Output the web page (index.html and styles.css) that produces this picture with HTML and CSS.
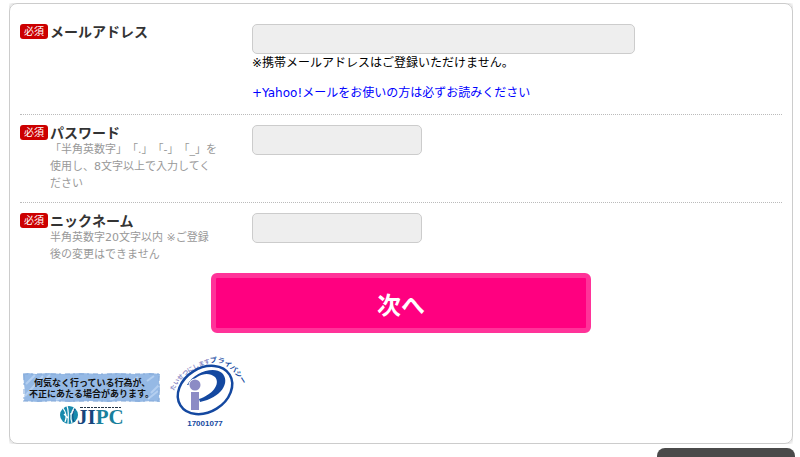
FILE: index.html
```html
<!DOCTYPE html>
<html lang="ja">
  <head>
    <meta charset="UTF-8" />
    <meta name="viewport" content="width=device-width, initial-scale=1.0" />
    <title>会員登録</title>

    <link rel="stylesheet" href="styles.css">
  </head>
  <body>
    <div class="box">
      <form>
        <div class="row">
          <span class="required">必須</span>
          <div class="item">
            <label for="mail">メールアドレス</label>
          </div>
          <div class="field">
            <input type="email" id="mail" class="wide" />
            <p>※携帯メールアドレスはご登録いただけません。</p>
            <a href="#">+Yahoo!メールをお使いの方は必ずお読みください</a>
          </div>
        </div>

        <div class="row">
          <span class="required">必須</span>
          <div class="item">
            <label for="password">パスワード</label>
            <p>「半角英数字」「.」「-」「_」を使用し、8文字以上で入力してください</p>
          </div>
          <div class="field">
            <input type="password" id="password" />
          </div>
        </div>

        <div class="row">
          <span class="required">必須</span>
          <div class="item">
            <label for="nickname">ニックネーム</label>
            <p>半角英数字20文字以内 ※ご登録後の変更はできません</p>
          </div>
          <div class="field">
            <input type="text" id="nickname" />
          </div>
        </div>

        <button type="submit" class="next">次へ</button>
      </form>

      <div class="logos">
        <!-- JIPC -->
        <a href="#" aria-label="JIPC">
          <svg width="144" height="80" viewBox="0 0 144 80">
            <path fill="#95b9e5" d="M3 21l5-1 8 1 12-1 15 1 18-1 20 1 16-1 18 1 15-1 10 1-1 7 1 8-1 7 1 6-9-1-12 1-17-1-14 1-18-1-20 1-17-1-15 1-14-1 1-9-1-8z" />
            <path stroke="#b4cff0" stroke-width="2" fill="none" d="M6 31l9-9M5 43l18-20M24 27l6-5M118 24l-9 6M134 23l-7 5M139 32l-8 8M128 46l10-8M36 47l9-4M90 47l10-5" />
            <path stroke="#84a9d8" fill="none" stroke-dasharray="5 3 2 4" d="M3 21h136M3 48h137M4 22v25M139 23v24" />
            <text class="banner" x="14" y="33">何気なく行っている行為が、</text>
            <text class="banner" x="9" y="44">不正にあたる場合があります。</text>
            <path stroke="#234" stroke-width="1" stroke-dasharray="3 1 2 1" d="M60 54.500h42" />
            <circle cx="49" cy="62" r="9" fill="#1689ac" />
            <path stroke="#fff" stroke-width="1.200" fill="none" d="M43 55q5 7 2 14M47 53q2 5 1 18M54 55q-5 7-2 15M50 61q3 0 4-4M44 61l4 4" />
            <path stroke="#17457c" stroke-width="1" fill="none" d="M55 56q-4 6-1 13" />
            <text class="jipc" x="57" y="71">JI<tspan fill="#19809c">PC</tspan></text>
          </svg>
        </a>

        <!-- プライバシーマーク -->
        <a href="#" aria-label="プライバシーマーク">
          <svg width="88" height="80" viewBox="0 0 88 80">
            <path id="arc_left" fill="none" d="M10 38Q17 18 52 8" />
            <path id="arc_right" fill="none" d="M46 10C60 7 71 17 81 36" />
            <text class="seal_left"><textPath href="#arc_left">たいせつにします</textPath></text>
            <text class="seal_right"><textPath href="#arc_right">プライバシー</textPath></text>
            <ellipse cx="41" cy="37" rx="29" ry="22" transform="rotate(-32 41 37)" fill="none" stroke="#1448a0" stroke-width="2.500" />
            <path fill="#1448a0" d="M23 32C30 19 50 13 58 20C67 29 57 45 36 49L35 46C48 42 57 31 51 24C44 18 33 21 25 32Z" />
            <circle cx="31" cy="32" r="6.500" fill="#fff" />
            <circle cx="31" cy="32" r="5.500" fill="#8c8bc5" />
            <path fill="#8c8bc5" d="M27 39h8v18h-8z" />
            <text class="number" x="41" y="73">17001077</text>
          </svg>
        </a>
      </div>
    </div>

    <a href="#" class="page_top" aria-label="ページの先頭へ"></a>
  </body>
</html>
```

FILE: styles.css
```css
* {
  box-sizing: border-box;
}

body {
  margin: 3px 7px 0 9px;
  background-color: #fff;
  color: #000;
  font-family: "DejaVu Sans", "Noto Sans CJK JP", sans-serif;
  font-size: 12px;
  line-height: 17px;
  text-spacing-trim: space-all;
}

p {
  margin: 0;
}

a {
  color: #00f;
  text-decoration: none;
}

.box {
  padding: 10px;
  border: 1px solid #ccc;
  border-radius: 8px;
  box-shadow: 0 0 4px #bbb;
}

.row {
  display: flex;
  align-items: flex-start;
  padding: 10px 0;
  border-bottom: 1px dotted #bbb;
}

.row:last-of-type {
  border-bottom: none;
}

.required {
  width: 28px;
  margin-right: 2px;
  border-radius: 3px;
  background-color: #c00;
  color: #fff;
  font-size: 10px;
  line-height: 15px;
  text-align: center;
}

.item {
  width: 168px;
  margin-right: 34px;
}

.item label {
  display: block;
  color: #333;
  font-size: 14px;
  font-weight: bold;
  line-height: 16px;
}

.item p {
  color: #999;
  font-size: 11px;
}

.field {
  flex: 1;
  line-height: 18px;
}

.field input {
  display: block;
  width: 170px;
  height: 30px;
  padding: 4px 8px;
  border: 1px solid #ccc;
  border-radius: 5px;
  background-color: #eee;
}

.field input.wide {
  width: 383px;
  max-width: 100%;
}

.field a {
  display: block;
  margin: 12px 0 2px;
}

.next {
  display: block;
  width: 380px;
  height: 60px;
  margin: 0 auto;
  border: 5px solid #ff3399;
  border-radius: 6px;
  background-color: #ff0080;
  color: #fff;
  font-family: inherit;
  font-size: 24px;
  font-weight: bold;
}

.logos {
  display: flex;
  margin-top: 20px;
}

.logos svg {
  display: block;
  overflow: visible;
}

.banner {
  fill: #111;
  font-family: "Noto Sans CJK JP", sans-serif;
  font-size: 9px;
  font-weight: bold;
}

.jipc {
  fill: #17457c;
  font-family: "Liberation Serif", serif;
  font-size: 21px;
  font-weight: bold;
}

.seal_left {
  fill: #8c8bc5;
  font-family: "Noto Sans CJK JP", sans-serif;
  font-size: 6px;
  font-weight: bold;
}

.seal_right {
  fill: #1448a0;
  font-family: "Noto Sans CJK JP", sans-serif;
  font-size: 7px;
  font-weight: bold;
}

.number {
  fill: #1448a0;
  font-family: "Liberation Sans", sans-serif;
  font-size: 8px;
  font-weight: bold;
  text-anchor: middle;
}

.page_top {
  position: fixed;
  right: 5px;
  bottom: 0;
  width: 138px;
  height: 9px;
  border-radius: 8px 8px 0 0;
  background-color: #4a4a4a;
}
```
